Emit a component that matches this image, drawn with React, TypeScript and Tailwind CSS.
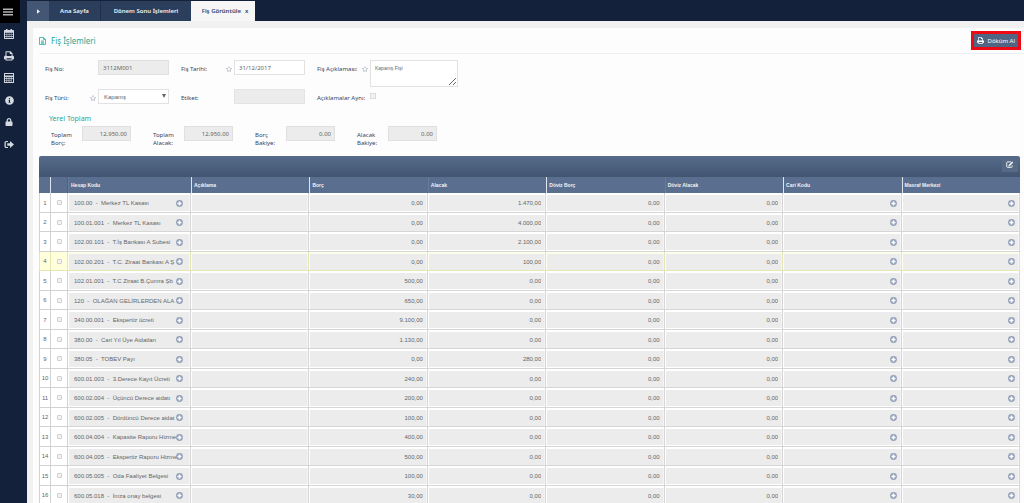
import type { ReactNode } from "react";
import { FaInfoCircle, FaLock, FaRegStar } from "react-icons/fa";

const ui = "font-['Noto_Sans',sans-serif]";
const sans = "font-['Liberation_Sans',sans-serif]";

function MenuIcon() {
  return (
    <svg viewBox="0 0 10 8" className="h-2 w-[10px]" fill="currentColor">
      <path d="M0 .5h10V2H0zM0 3.3h10v1.5H0zM0 6.1h10v1.5H0z" />
    </svg>
  );
}

function CalendarIcon() {
  return (
    <svg viewBox="0 0 20 20" className="size-[10px]" fill="currentColor">
      <path
        fillRule="evenodd"
        d="M4 0h3v2h6V0h3v2h2.500Q20 2 20 3.500V18.500Q20 20 18.500 20h-17Q0 20 0 18.500v-15Q0 2 1.500 2H4zM2 7.500v2.800h3.300V7.500zm4.300 0v2.800h3.300V7.500zm4.200 0v2.800h3.300V7.500zm4.200 0v2.800H18V7.500zM2 11.400v2.800h3.300v-2.800zm4.300 0v2.800h3.300v-2.800zm4.200 0v2.800h3.300v-2.800zm4.200 0v2.800H18v-2.800zM2 15.300v2.800h3.300v-2.800zm4.300 0v2.800h3.300v-2.800zm4.200 0v2.800h3.300v-2.800zm4.200 0v2.800H18v-2.800z"
      />
    </svg>
  );
}

function PrintIcon({ className }: { className: string }) {
  return (
    <svg viewBox="0 0 20 20" className={className} fill="currentColor">
      <path
        fillRule="evenodd"
        d="M3 1.500Q3 .5 4 .5h9l4 4V9q3 0 3 3v4.500h-3V18q0 1-1 1H4q-1 0-1-1v-1.500H0V12q0-3 3-3zM5 2.500V10h10V6h-3.500V2.500zM5 14.500V17h10v-2.500z"
      />
    </svg>
  );
}

function CalculatorIcon() {
  return (
    <svg viewBox="0 0 20 20" className="size-[10px]" fill="currentColor">
      <path
        fillRule="evenodd"
        d="M1 0h18q1 0 1 1v18q0 1-1 1H1q-1 0-1-1V1q0-1 1-1zM2 2v3h16V2zM2 8v2.500h3V8zm4.300 0v2.500h3V8zm4.300 0v2.500h3V8zM15 8v2.500h3V8zM2 11.800v2.500h3v-2.500zm4.300 0v2.500h3v-2.500zm4.300 0v2.500h3v-2.500zM2 15.600v2.500h3v-2.500zm4.300 0v2.500h3v-2.500zm4.300 0v2.500h3v-2.500zM15 11.800v6.300h3v-6.300z"
      />
    </svg>
  );
}

function SignOutIcon() {
  return (
    <svg viewBox="0 0 20 18" className="h-[9px] w-[10px]" fill="currentColor">
      <path d="M8 2H4.500Q1 2 1 5v8q0 3 3.500 3H8v-2.200H5Q3.500 13.800 3.500 12.500v-7Q3.500 4.200 5 4.200h3zM12 2l8 7-8 7v-4.500H6.500v-5H12z" />
    </svg>
  );
}

function DocumentIcon() {
  return (
    <svg viewBox="0 0 14 16" className="h-2 w-[7px]" fill="none" stroke="currentColor" strokeWidth="1.500">
      <path d="M1 1h8l4 4v10H1zM9 1v4h4M4 8h6M4 10.300h6M4 12.600h6" />
    </svg>
  );
}

function EditIcon() {
  return (
    <svg viewBox="0 0 18 16" className="h-[7px] w-2" fill="none" stroke="currentColor">
      <path d="M11 2H3.500Q1.500 2 1.500 4v8.500q0 2 2 2H12q2 0 2-2V10" strokeWidth="2" />
      <path d="M7.500 10.500l7.500-8" strokeWidth="3.500" />
      <path d="M6 12l.6-3 2.400 2.200z" fill="currentColor" strokeWidth="1" />
    </svg>
  );
}

function AddIcon() {
  return (
    <svg viewBox="0 0 14 14" className="size-[7px]">
      <circle cx="7" cy="7" r="6.800" fill="#93a0b8" />
      <path d="M7 3v8M3 7h8" stroke="#fff" strokeWidth="3" />
    </svg>
  );
}

const menu: { label: string; icon: ReactNode }[] = [
  { label: "Takvim", icon: <CalendarIcon /> },
  { label: "Yazdır", icon: <PrintIcon className="size-[10px]" /> },
  { label: "Hesap Makinesi", icon: <CalculatorIcon /> },
  { label: "Bilgi", icon: <FaInfoCircle className="size-[9px]" /> },
  { label: "Kilitle", icon: <FaLock className="size-2" /> },
  { label: "Çıkış", icon: <SignOutIcon /> },
];

const totals = [
  { id: "toplam-borc", first: "Toplam", second: "Borç:", value: "12,950.00" },
  { id: "toplam-alacak", first: "Toplam", second: "Alacak:", value: "12,950.00" },
  { id: "borc-bakiye", first: "Borç", second: "Bakiye:", value: "0.00" },
  { id: "alacak-bakiye", first: "Alacak", second: "Bakiye:", value: "0.00" },
];

const columns = [
  { name: "Hesap Kodu", divider: false },
  { name: "Açıklama", divider: true },
  { name: "Borç", divider: true },
  { name: "Alacak", divider: false },
  { name: "Döviz Borç", divider: true },
  { name: "Döviz Alacak", divider: false },
  { name: "Cari Kodu", divider: true },
  { name: "Masraf Merkezi", divider: true },
];

const rows = [
  { code: "100.00", name: "Merkez TL Kasası", debit: "0,00", credit: "1.470,00" },
  { code: "100.01.001", name: "Merkez TL Kasası", debit: "0,00", credit: "4.000,00" },
  { code: "102.00.101", name: "T.İş Bankası A Subesi", debit: "0,00", credit: "2.100,00" },
  { code: "102.00.201", name: "T.C. Ziraat Bankası A Ş", debit: "0,00", credit: "100,00" },
  { code: "102.01.001", name: "T.C Ziraat B.Çumra Şb", debit: "500,00", credit: "0,00" },
  { code: "120", name: "OLAĞAN GELİRLERDEN ALA", debit: "650,00", credit: "0,00" },
  { code: "340.00.001", name: "Ekspertiz ücreti", debit: "9.100,00", credit: "0,00" },
  { code: "380.00", name: "Cari Yıl Üye Aidatları", debit: "1.130,00", credit: "0,00" },
  { code: "380.05", name: "TOBEV Payı", debit: "0,00", credit: "280,00" },
  { code: "600.01.003", name: "3.Derece Kayıt Ücreti", debit: "240,00", credit: "0,00" },
  { code: "600.02.004", name: "Üçüncü Derece aidatı", debit: "200,00", credit: "0,00" },
  { code: "600.02.005", name: "Dördüncü Derece aidat", debit: "100,00", credit: "0,00" },
  { code: "600.04.004", name: "Kapasite Raporu Hizme", debit: "400,00", credit: "0,00" },
  { code: "600.04.005", name: "Ekspertiz Raporu Hizme", debit: "500,00", credit: "0,00" },
  { code: "600.05.005", name: "Oda Faaliyet Belgesi", debit: "100,00", credit: "0,00" },
  { code: "600.05.018", name: "İmza onay belgesi", debit: "30,00", credit: "0,00" },
];

function Field({ id, label, star, children }: { id: string; label: string; star?: boolean; children: ReactNode }) {
  return (
    <div className="flex items-start">
      <div className="flex h-[18px] w-[53px] shrink-0 items-center justify-between pr-0.5">
        <label htmlFor={id} className="whitespace-nowrap">
          {label}
        </label>
        {star && <FaRegStar className="size-[6px] shrink-0 text-[#a5acb8]" />}
      </div>
      {children}
    </div>
  );
}

function Cell({
  label,
  value,
  active,
  kind,
}: {
  label: string;
  value: string;
  active: boolean;
  kind: "code" | "text" | "amount" | "lookup";
}) {
  const lookup = kind === "code" || kind === "lookup";
  const padding = kind === "code" ? "pr-[6px]" : "pr-[3px]";
  return (
    <td className={`border-r border-b p-0 pt-px pl-px ${active ? "border-[#e4e6b4] bg-[#fdfdec]" : "border-[#d6d6d6] bg-white"}`}>
      <div className={`flex h-4 items-center border-r border-[#f4f4f4] bg-[#ececec] pl-[5px] ${padding}`}>
        <input
          readOnly
          aria-label={label}
          value={value}
          className={`h-4 min-w-0 flex-1 bg-transparent text-[6px] whitespace-pre text-[#666] outline-none ${kind === "amount" ? "text-right" : ""}`}
        />
        {lookup && (
          <button type="button" aria-label={`${label} seç`} className="-ml-1">
            <AddIcon />
          </button>
        )}
      </div>
    </td>
  );
}

export default function App() {
  return (
    <div className={`flex h-screen overflow-hidden bg-[#f1f1f2] text-[6px] leading-2 text-[#2f4468] ${ui}`}>
      <aside className="w-[27px] shrink-0 bg-[#14213a] text-[#d5dae2]">
        <button type="button" aria-label="Menü" className="flex h-[23px] w-5 items-center bg-black pl-[3px] text-[#b4b4b4]">
          <MenuIcon />
        </button>
        <nav className="flex flex-col">
          {menu.map((item) => (
            <a key={item.label} href="#" aria-label={item.label} className="flex h-[22px] w-[18px] items-center justify-center">
              {item.icon}
            </a>
          ))}
        </nav>
      </aside>

      <div className="flex min-w-0 flex-1 flex-col">
        <nav className="flex h-[21px] shrink-0 bg-[#14213a] pt-px font-semibold text-[#eef1f5]">
          <button type="button" aria-label="Sekmeler" className="flex w-[22px] items-center justify-center bg-[#435775]">
            <svg viewBox="0 0 4 6" className="h-[5px] w-[3px]" fill="currentColor">
              <path d="M0 0l4 3-4 3z" />
            </svg>
          </button>
          <a href="#" className="flex w-[52px] items-center justify-center border-r border-[#1f2e49] bg-[#2b3f5c]">
            Ana Sayfa
          </a>
          <a href="#" className="flex w-[90px] items-center justify-center bg-[#2b3f5c]">
            Dönem Sonu İşlemleri
          </a>
          <a href="#" className="flex w-16 items-center justify-center gap-1 bg-[#f6f6f7] pl-1 text-[#2f4468]">
            Fiş Görüntüle
            <span>x</span>
          </a>
        </nav>

        <main className="mt-[7px] ml-[6px] min-h-0 flex-1 overflow-hidden bg-[#fdfdfd]">
          <header className="ml-[6px] flex h-[26px] items-center justify-between border-b border-[#efefef] pr-[3px]">
            <h1 className="flex items-center gap-[5px] text-[8px] text-[#1fa79b]">
              <DocumentIcon />
              Fiş İşlemleri
            </h1>
            <div className="border-[3px] border-[#ee0a14]">
              <button type="button" className="flex h-[13px] items-center gap-1 bg-[#506484] px-[3px] text-white">
                <PrintIcon className="size-[7px]" />
                Döküm Al
              </button>
            </div>
          </header>

          <form className="pt-[6px] pl-3">
            <div className="flex h-[29px] gap-3">
              <Field id="fis-no" label="Fiş No:">
                <input id="fis-no" readOnly value="3112M001" className="h-[15px] w-[71px] border border-[#e0e0e0] bg-[#ececec] px-1 text-[6px] text-[#666]" />
              </Field>
              <Field id="fis-tarihi" label="Fiş Tarihi:" star>
                <input id="fis-tarihi" defaultValue="31/12/2017" className="h-[15px] w-[71px] border border-[#e2e2e2] bg-white px-1 text-[6px] text-[#666]" />
              </Field>
              <Field id="fis-aciklamasi" label="Fiş Açıklaması:" star>
                <textarea
                  id="fis-aciklamasi"
                  defaultValue="Kapanış Fişi"
                  className={`h-[27px] w-[88px] resize border border-[#e2e2e2] bg-white px-1 py-[3px] text-[5px] leading-2 text-[#666] ${sans}`}
                />
              </Field>
            </div>
            <div className="flex h-[25px] gap-3">
              <Field id="fis-turu" label="Fiş Türü:" star>
                <div className="relative">
                  <select
                    id="fis-turu"
                    defaultValue="Kapanış"
                    className={`block h-[15px] w-[71px] appearance-none border border-[#e2e2e2] bg-white px-[5px] text-[6px] text-[#666] ${sans}`}
                  >
                    <option>Kapanış</option>
                  </select>
                  <svg viewBox="0 0 4 4" className="pointer-events-none absolute top-[5px] right-[3px] size-1" fill="#666">
                    <path d="M0 0h4L2 4z" />
                  </svg>
                </div>
              </Field>
              <Field id="etiket" label="Etiket:">
                <input id="etiket" readOnly value="" className="h-[15px] w-[71px] border border-[#e4e4e4] bg-[#ececec] px-1 text-[6px]" />
              </Field>
              <Field id="aciklamalar-ayni" label="Açıklamalar Aynı:">
                <input id="aciklamalar-ayni" type="checkbox" className="mt-1 size-[6px] appearance-none border border-[#dcdcdc] bg-[#f0f0f0]" />
              </Field>
            </div>

            <fieldset className="pl-[6px]">
              <legend className="-ml-0.5 text-[7px] leading-[10px] text-[#1fa79b]">Yerel Toplam</legend>
              <div className="flex h-8 gap-[22px] pt-0.5">
                {totals.map((total) => (
                  <div key={total.id} className="flex items-start">
                    <label htmlFor={total.id} className="w-[31px] pt-[5px]">
                      {total.first}
                      <br />
                      {total.second}
                    </label>
                    <input
                      id={total.id}
                      readOnly
                      value={total.value}
                      className="h-[15px] w-[49px] border border-[#e0e0e0] bg-[#ececec] px-[3px] text-right text-[6px] text-[#666]"
                    />
                  </div>
                ))}
              </div>
            </fieldset>
          </form>

          <section className="mr-1 ml-[6px]">
            <div className="flex h-[21px] justify-end rounded-t-xs bg-linear-to-b from-[#566b8b] to-[#425672] pt-px pr-0.5">
              <button type="button" aria-label="Düzenle" className="flex h-[15px] w-4 items-center justify-center bg-[#566985] text-white">
                <EditIcon />
              </button>
            </div>
            <table className={`w-full table-fixed border-separate border-spacing-0 text-[6px] text-[#666] ${sans}`}>
              <colgroup>
                <col className="w-3" />
                <col className="w-[17px]" />
                <col className="w-[123px]" />
                <col />
                <col />
                <col />
                <col />
                <col />
                <col />
                <col />
              </colgroup>
              <thead className="bg-[#5a6e8f] text-[5px] text-[#f0f3f7]">
                <tr className="h-4">
                  <th className="border-r border-[#dfe4ec] p-0" />
                  <th className="border-r border-[#506382] p-0" />
                  {columns.map((column) => (
                    <th
                      key={column.name}
                      className={`border-l p-0 pl-0.5 text-left font-bold ${column.divider ? "border-[#dfe4ec]" : "border-[#667a9a]"}`}
                    >
                      {column.name}
                    </th>
                  ))}
                </tr>
              </thead>
              <tbody>
                {rows.map((row, index) => {
                  const active = index === 3;
                  const plain = active ? "border-[#e4e6b4] bg-[#ffffdc]" : "border-[#d2d2d2] bg-white";
                  return (
                    <tr key={row.code} className="odd:h-5 even:h-[19px]">
                      <td className={`border-r border-b border-l p-0 text-center ${plain}`}>{index + 1}</td>
                      <td className={`border-r border-b p-0 ${plain}`}>
                        <input
                          type="checkbox"
                          aria-label={`Satır ${index + 1}`}
                          className="mx-auto block size-[5px] appearance-none rounded-[1px] border border-[#cfcfcf] bg-[#f4f4f4]"
                        />
                      </td>
                      <Cell kind="code" label="Hesap Kodu" value={`${row.code}  -  ${row.name}`} active={active} />
                      <Cell kind="text" label="Açıklama" value="" active={active} />
                      <Cell kind="amount" label="Borç" value={row.debit} active={active} />
                      <Cell kind="amount" label="Alacak" value={row.credit} active={active} />
                      <Cell kind="amount" label="Döviz Borç" value="0,00" active={active} />
                      <Cell kind="amount" label="Döviz Alacak" value="0,00" active={active} />
                      <Cell kind="lookup" label="Cari Kodu" value="" active={active} />
                      <Cell kind="lookup" label="Masraf Merkezi" value="" active={active} />
                    </tr>
                  );
                })}
              </tbody>
            </table>
          </section>
        </main>
      </div>
    </div>
  );
}
